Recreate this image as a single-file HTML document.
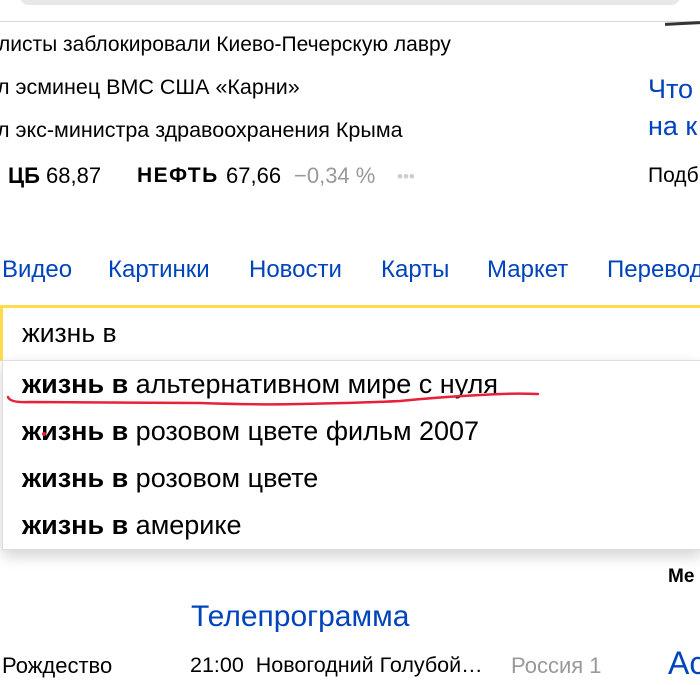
<!DOCTYPE html>
<html><head><meta charset="utf-8"><style>
body{margin:0;width:700px;height:685px;overflow:hidden;background:#fff;font-family:"Liberation Sans",Arial,sans-serif;position:relative}
.a{position:absolute;white-space:nowrap;line-height:1}
.b{color:#0044bb}
</style></head><body>
<div class="a" style="left:20px;top:-12px;width:660px;height:17px;background:#e8e8ea;border-radius:9px"></div>
<div class="a" style="left:0;top:21px;width:700px;height:1px;background:#d8d8d8"></div>
<div class="a" style="left:665px;top:22px;width:35px;height:3px;background:#333;transform:rotate(-3deg)"></div>

<div class="a" style="left:-2px;top:34px;font-size:21px">листы заблокировали Киево-Печерскую лавру</div>
<div class="a" style="left:-3px;top:77px;font-size:21.5px">л эсминец ВМС США «Карни»</div>
<div class="a" style="left:-3px;top:120px;font-size:21.5px">л экс-министра здравоохранения Крыма</div>
<div class="a" style="left:8px;top:165px;font-size:22px"><b>ЦБ</b> 68,87</div>
<div class="a" style="left:137px;top:165px;font-size:21px;font-weight:bold;letter-spacing:1.5px">НЕФТЬ</div>
<div class="a" style="left:226px;top:165px;font-size:22px">67,66</div>
<div class="a" style="left:294px;top:165px;font-size:22px;color:#999">−0,34 %</div>
<div class="a" style="left:397px;top:168px;font-size:17px;color:#ccc">•••</div>

<div class="a b" style="left:648px;top:76px;font-size:27px">Что</div>
<div class="a b" style="left:648px;top:113px;font-size:27px">на к</div>
<div class="a" style="left:648px;top:165px;font-size:21px">Подб</div>

<div class="a b" style="left:2px;top:258px;font-size:24px">Видео</div>
<div class="a b" style="left:108px;top:258px;font-size:24px">Картинки</div>
<div class="a b" style="left:249px;top:258px;font-size:24px">Новости</div>
<div class="a b" style="left:381px;top:258px;font-size:24px">Карты</div>
<div class="a b" style="left:487px;top:258px;font-size:24px">Маркет</div>
<div class="a b" style="left:607px;top:258px;font-size:24px">Перевод</div>

<div class="a" style="left:0;top:305px;width:700px;height:56px;border-top:3px solid #ffdb4d;border-left:3px solid #ffdb4d;box-sizing:border-box"></div>
<div class="a" style="left:22px;top:320px;font-size:26.5px">жизнь в</div>

<div class="a" style="left:2px;top:360px;width:700px;height:190px;border:1px solid #ddd;box-sizing:border-box;box-shadow:0 6px 14px rgba(0,0,0,0.18);background:#fff"></div>
<div class="a" style="left:22px;top:371px;font-size:27px"><b>жизнь в</b> альтернативном мире с нуля</div>
<div class="a" style="left:22px;top:418px;font-size:27px"><b>жизнь в</b> розовом цвете фильм 2007</div>
<div class="a" style="left:22px;top:465px;font-size:27px"><b>жизнь в</b> розовом цвете</div>
<div class="a" style="left:22px;top:512px;font-size:27px"><b>жизнь в</b> америке</div>
<svg class="a" style="left:0;top:390px" width="560" height="30"><path d="M8 7 Q10 13 30 12 L200 13 Q260 15 300 14 Q360 13 400 11 Q440 7 480 5 Q510 3 538 4" fill="none" stroke="#e8203a" stroke-width="2.5" stroke-linecap="round"/></svg>
<div class="a" style="left:42px;top:432px;width:4px;height:4px;background:#e8203a;border-radius:2px"></div>

<div class="a" style="left:668px;top:567px;font-size:19px;font-weight:bold">Ме</div>
<div class="a b" style="left:191px;top:602px;font-size:30px">Телепрограмма</div>
<div class="a" style="left:2px;top:655px;font-size:22px">Рождество</div>
<div class="a" style="left:190px;top:655px;font-size:21.5px">21:00&nbsp; Новогодний Голубой…</div>
<div class="a" style="left:511px;top:655px;font-size:22px;color:#999">Россия 1</div>
<div class="a b" style="left:668px;top:647px;font-size:32px">Ас</div>
</body></html>
